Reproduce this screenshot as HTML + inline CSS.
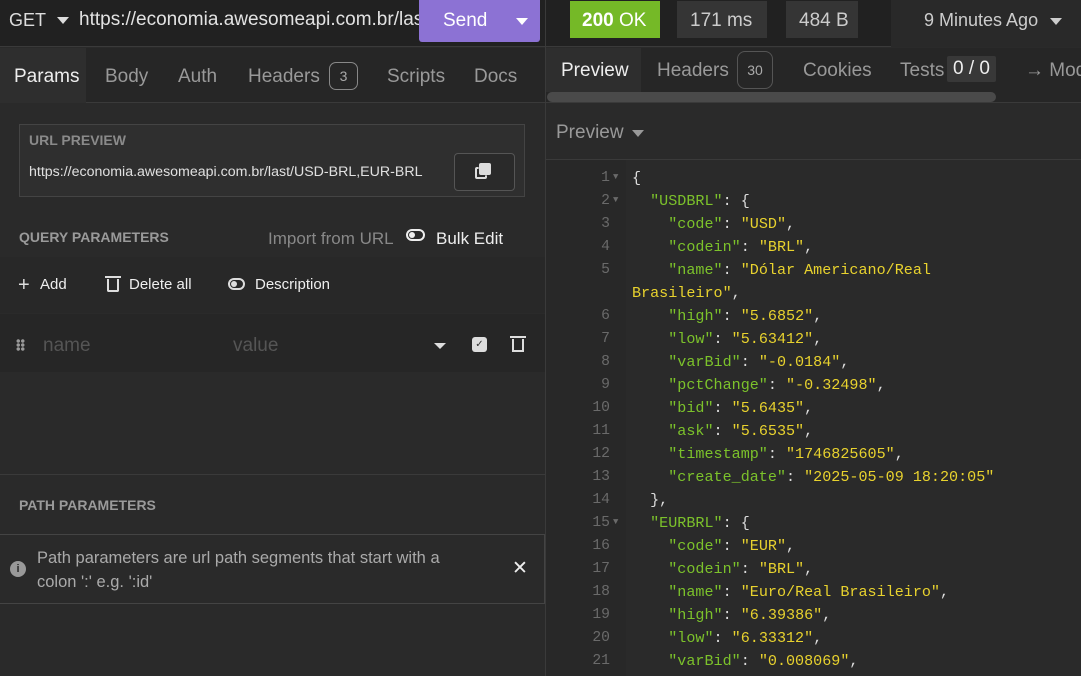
<!DOCTYPE html>
<html><head><meta charset="utf-8"><style>
*{margin:0;padding:0;box-sizing:border-box}
body{width:1081px;height:676px;overflow:hidden;background:#2a2a2a;font-family:"Liberation Sans",sans-serif;color:#ddd;position:relative}
.a{position:absolute;white-space:nowrap}
.mono{font-family:"Liberation Mono",monospace;font-size:15.1px}
.mono .a{white-space:pre}
.k{color:#7cc22b}.v{color:#e8d22e}.p{color:#ddd}
.ln{position:absolute;left:560px;width:50px;text-align:right;color:#6a6a6a;font-size:14.7px}
.tr{position:absolute;left:613px;top:-1px;font-size:9px;color:#6a6a6a}
.r{position:relative;height:23px}
</style></head><body>
<div class="a" style="left:0;top:0;width:1081px;height:47px;background:#212121;border-bottom:1px solid #3a3a3a"></div>
<div class="a" style="left:9px;top:10px;font-size:18px;color:#ddd">GET</div>
<div class="a" style="left:57px;top:17px;width:0;height:0;border-left:6px solid transparent;border-right:6px solid transparent;border-top:7px solid #ddd"></div>
<div class="a" style="left:79px;top:9px;font-size:19px;color:#e2e2e2;width:340px;overflow:hidden">https://economia.awesomeapi.com.br/last</div>
<div class="a" style="left:419px;top:0;width:121px;height:42px;background:#8c72d4;border-radius:0 0 3px 3px"></div>
<div class="a" style="left:443px;top:10px;font-size:19px;color:#fff">Send</div>
<div class="a" style="left:516px;top:18px;border-left:6px solid transparent;border-right:6px solid transparent;border-top:7px solid #fff"></div>
<div class="a" style="left:545px;top:0;width:1px;height:676px;background:#3a3a3a"></div>
<div class="a" style="left:570px;top:1px;width:90px;height:37px;background:#75b927"></div>
<div class="a" style="left:582px;top:10px;font-size:19px;color:#fff"><b>200</b> OK</div>
<div class="a" style="left:677px;top:1px;width:90px;height:37px;background:#353535"></div>
<div class="a" style="left:690px;top:10px;font-size:19px;color:#ccc">171 ms</div>
<div class="a" style="left:786px;top:1px;width:72px;height:37px;background:#353535"></div>
<div class="a" style="left:799px;top:10px;font-size:19px;color:#ccc">484 B</div>
<div class="a" style="left:891px;top:0;width:190px;height:47px;background:#292929"></div>
<div class="a" style="left:924px;top:10px;font-size:18px;color:#ccc">9 Minutes Ago</div>
<div class="a" style="left:1050px;top:18px;border-left:6px solid transparent;border-right:6px solid transparent;border-top:7px solid #ccc"></div>

<div class="a" style="left:0;top:48px;width:545px;height:55px;background:#262626;border-bottom:1px solid #3a3a3a"></div>
<div class="a" style="left:0;top:48px;width:86px;height:55px;background:#2e2e2e"></div>
<div class="a" style="left:14px;top:66px;font-size:19px;color:#eee">Params</div>
<div class="a" style="left:105px;top:66px;font-size:19px;color:#999">Body</div>
<div class="a" style="left:178px;top:66px;font-size:19px;color:#999">Auth</div>
<div class="a" style="left:248px;top:66px;font-size:19px;color:#999">Headers</div>
<div class="a" style="left:329px;top:62px;width:29px;height:28px;border:1px solid #888;border-radius:7px;font-size:14px;color:#aaa;text-align:center;line-height:26px">3</div>
<div class="a" style="left:387px;top:66px;font-size:19px;color:#999">Scripts</div>
<div class="a" style="left:474px;top:66px;font-size:19px;color:#999">Docs</div>

<div class="a" style="left:19px;top:124px;width:506px;height:73px;background:#2f2f2f;border:1px solid #444"></div>
<div class="a" style="left:29px;top:132px;font-size:14px;font-weight:bold;color:#8a8a8a">URL PREVIEW</div>
<div class="a" style="left:29px;top:164px;font-size:14.2px;color:#e0e0e0">https://economia.awesomeapi.com.br/last/USD-BRL,EUR-BRL</div>
<div class="a" style="left:454px;top:153px;width:61px;height:38px;border:1px solid #555;border-radius:4px;background:#2a2a2a"></div>
<div class="a" style="left:479px;top:163px;width:12px;height:12px;background:#ddd;border-radius:2px"></div>
<div class="a" style="left:475px;top:167px;width:12px;height:12px;border:2px solid #ddd;border-radius:2px;background:#2a2a2a;clip-path:polygon(0 0,30% 0,30% 70%,100% 70%,100% 100%,0 100%)"></div>

<div class="a" style="left:19px;top:229px;font-size:14px;font-weight:bold;color:#9a9a9a">QUERY PARAMETERS</div>
<div class="a" style="left:268px;top:229px;font-size:17px;color:#888">Import from URL</div>
<div class="a" style="left:406px;top:229px;width:19px;height:12px;border:2px solid #eee;border-radius:6px"></div>
<div class="a" style="left:409px;top:232px;width:6px;height:6px;background:#eee;border-radius:3px"></div>
<div class="a" style="left:436px;top:229px;font-size:17px;color:#eee">Bulk Edit</div>

<div class="a" style="left:0;top:257px;width:545px;height:56px;background:#282828"></div>
<div class="a" style="left:18px;top:274px;font-size:20px;color:#ddd">+</div>
<div class="a" style="left:40px;top:276px;font-size:15px;color:#eee">Add</div>
<div class="a" style="left:107px;top:279px;width:12px;height:13px;border:2px solid #ddd;border-top:none;border-radius:0 0 2px 2px"></div>
<div class="a" style="left:105px;top:276px;width:16px;height:2px;background:#ddd"></div>
<div class="a" style="left:129px;top:276px;font-size:15px;color:#eee">Delete all</div>
<div class="a" style="left:228px;top:278px;width:17px;height:12px;border:2px solid #ddd;border-radius:6px"></div>
<div class="a" style="left:231px;top:281px;width:6px;height:6px;background:#ddd;border-radius:3px"></div>
<div class="a" style="left:255px;top:276px;font-size:15px;color:#eee">Description</div>

<div class="a" style="left:0;top:314px;width:545px;height:58px;background:#262626"></div>
<div class="a" style="left:16px;top:339px;width:9px;height:12px;background:radial-gradient(circle,#999 1.5px,transparent 2px) 0 0/4.5px 4px"></div>
<div class="a" style="left:43px;top:335px;font-size:19px;color:#555">name</div>
<div class="a" style="left:233px;top:335px;font-size:19px;color:#555">value</div>
<div class="a" style="left:434px;top:343px;border-left:6px solid transparent;border-right:6px solid transparent;border-top:6px solid #ddd"></div>
<div class="a" style="left:472px;top:337px;width:15px;height:15px;background:#ddd;border-radius:3px;color:#333;font-size:10px;text-align:center;line-height:15px">✓</div>
<div class="a" style="left:512px;top:339px;width:12px;height:13px;border:2px solid #ddd;border-top:none"></div>
<div class="a" style="left:510px;top:336px;width:16px;height:2px;background:#ddd"></div>

<div class="a" style="left:0;top:474px;width:545px;height:1px;background:#3a3a3a"></div>
<div class="a" style="left:19px;top:497px;font-size:14px;font-weight:bold;color:#9a9a9a">PATH PARAMETERS</div>
<div class="a" style="left:0;top:534px;width:545px;height:70px;border:1px solid #444;border-left:none"></div>
<div class="a" style="left:10px;top:561px;width:16px;height:16px;border-radius:8px;background:#999;color:#2a2a2a;font-size:11px;font-weight:bold;text-align:center;line-height:16px">i</div>
<div class="a" style="left:37px;top:546px;font-size:16.5px;color:#aaa;line-height:24px">Path parameters are url path segments that start with a<br>colon ':' e.g. ':id'</div>
<div class="a" style="left:512px;top:557px;font-size:19px;color:#eee">✕</div>

<div class="a" style="left:546px;top:48px;width:535px;height:44px;background:#262626"></div>
<div class="a" style="left:546px;top:48px;width:95px;height:44px;background:#2e2e2e"></div>
<div class="a" style="left:561px;top:60px;font-size:19px;color:#eee">Preview</div>
<div class="a" style="left:657px;top:60px;font-size:19px;color:#999">Headers</div>
<div class="a" style="left:737px;top:51px;width:36px;height:38px;border:1px solid #555;border-radius:8px;font-size:14px;color:#aaa;text-align:center;line-height:36px">30</div>
<div class="a" style="left:803px;top:60px;font-size:19px;color:#999">Cookies</div>
<div class="a" style="left:900px;top:60px;font-size:19px;color:#999">Tests</div>
<div class="a" style="left:947px;top:56px;width:49px;height:26px;background:#383838;border-radius:2px;font-size:19px;color:#eee;text-align:center;line-height:26px">0 / 0</div>
<div class="a" style="left:1025px;top:60px;font-size:19px;color:#999">→ Mod</div>
<div class="a" style="left:546px;top:92px;width:535px;height:11px;background:#262626;border-bottom:1px solid #3a3a3a"></div>
<div class="a" style="left:547px;top:92px;width:449px;height:10px;background:#4a4a4a;border-radius:5px"></div>
<div class="a" style="left:556px;top:122px;font-size:19px;color:#999">Preview</div>
<div class="a" style="left:632px;top:130px;border-left:6px solid transparent;border-right:6px solid transparent;border-top:7px solid #999"></div>
<div class="a" style="left:546px;top:159px;width:535px;height:1px;background:#3a3a3a"></div>
<div class="a" style="left:546px;top:160px;width:80px;height:516px;background:#282828"></div>

<div class="a mono" style="left:0;top:167px;line-height:23px;width:1081px">
<div class="r"><span class="ln">1</span><span class="tr">▼</span><span class="a p" style="left:632px">{</span></div>
<div class="r"><span class="ln">2</span><span class="tr">▼</span><span class="a" style="left:632px">  <span class="k">"USDBRL"</span><span class="p">: {</span></span></div>
<div class="r"><span class="ln">3</span><span class="a" style="left:632px">    <span class="k">"code"</span><span class="p">: </span><span class="v">"USD"</span><span class="p">,</span></span></div>
<div class="r"><span class="ln">4</span><span class="a" style="left:632px">    <span class="k">"codein"</span><span class="p">: </span><span class="v">"BRL"</span><span class="p">,</span></span></div>
<div class="r"><span class="ln">5</span><span class="a" style="left:632px">    <span class="k">"name"</span><span class="p">: </span><span class="v">"Dólar Americano/Real</span></span></div>
<div class="r"><span class="a" style="left:632px"><span class="v">Brasileiro"</span><span class="p">,</span></span></div>
<div class="r"><span class="ln">6</span><span class="a" style="left:632px">    <span class="k">"high"</span><span class="p">: </span><span class="v">"5.6852"</span><span class="p">,</span></span></div>
<div class="r"><span class="ln">7</span><span class="a" style="left:632px">    <span class="k">"low"</span><span class="p">: </span><span class="v">"5.63412"</span><span class="p">,</span></span></div>
<div class="r"><span class="ln">8</span><span class="a" style="left:632px">    <span class="k">"varBid"</span><span class="p">: </span><span class="v">"-0.0184"</span><span class="p">,</span></span></div>
<div class="r"><span class="ln">9</span><span class="a" style="left:632px">    <span class="k">"pctChange"</span><span class="p">: </span><span class="v">"-0.32498"</span><span class="p">,</span></span></div>
<div class="r"><span class="ln">10</span><span class="a" style="left:632px">    <span class="k">"bid"</span><span class="p">: </span><span class="v">"5.6435"</span><span class="p">,</span></span></div>
<div class="r"><span class="ln">11</span><span class="a" style="left:632px">    <span class="k">"ask"</span><span class="p">: </span><span class="v">"5.6535"</span><span class="p">,</span></span></div>
<div class="r"><span class="ln">12</span><span class="a" style="left:632px">    <span class="k">"timestamp"</span><span class="p">: </span><span class="v">"1746825605"</span><span class="p">,</span></span></div>
<div class="r"><span class="ln">13</span><span class="a" style="left:632px">    <span class="k">"create_date"</span><span class="p">: </span><span class="v">"2025-05-09 18:20:05"</span></span></div>
<div class="r"><span class="ln">14</span><span class="a p" style="left:632px">  },</span></div>
<div class="r"><span class="ln">15</span><span class="tr">▼</span><span class="a" style="left:632px">  <span class="k">"EURBRL"</span><span class="p">: {</span></span></div>
<div class="r"><span class="ln">16</span><span class="a" style="left:632px">    <span class="k">"code"</span><span class="p">: </span><span class="v">"EUR"</span><span class="p">,</span></span></div>
<div class="r"><span class="ln">17</span><span class="a" style="left:632px">    <span class="k">"codein"</span><span class="p">: </span><span class="v">"BRL"</span><span class="p">,</span></span></div>
<div class="r"><span class="ln">18</span><span class="a" style="left:632px">    <span class="k">"name"</span><span class="p">: </span><span class="v">"Euro/Real Brasileiro"</span><span class="p">,</span></span></div>
<div class="r"><span class="ln">19</span><span class="a" style="left:632px">    <span class="k">"high"</span><span class="p">: </span><span class="v">"6.39386"</span><span class="p">,</span></span></div>
<div class="r"><span class="ln">20</span><span class="a" style="left:632px">    <span class="k">"low"</span><span class="p">: </span><span class="v">"6.33312"</span><span class="p">,</span></span></div>
<div class="r"><span class="ln">21</span><span class="a" style="left:632px">    <span class="k">"varBid"</span><span class="p">: </span><span class="v">"0.008069"</span><span class="p">,</span></span></div>
</div>
</body></html>
